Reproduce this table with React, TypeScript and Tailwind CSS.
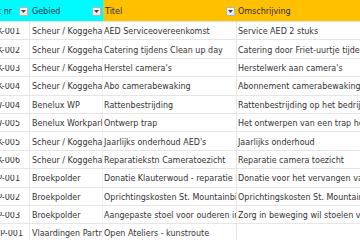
import React from 'react';

const rows = [
    { nr: 'SK-001', w: 'w-[20px]', gebied: 'Scheur / Koggehaven', titel: 'AED Serviceovereenkomst', oms: 'Service AED 2 stuks' },
    { nr: 'SK-002', w: 'w-[20px]', gebied: 'Scheur / Koggehaven', titel: 'Catering tijdens Clean up day', oms: 'Catering door Friet-uurtje tijdens Clean up day' },
    { nr: 'SK-003', w: 'w-[20px]', gebied: 'Scheur / Koggehaven', titel: "Herstel camera's", oms: "Herstelwerk aan camera's" },
    { nr: 'SK-004', w: 'w-[20px]', gebied: 'Scheur / Koggehaven', titel: 'Abo camerabewaking', oms: 'Abonnement camerabewaking' },
    { nr: 'BW-004', w: 'w-[20px]', gebied: 'Benelux WP', titel: 'Rattenbestrijding', oms: 'Rattenbestrijding op het bedrijventerrein' },
    { nr: 'BW-005', w: 'w-[20px]', gebied: 'Benelux Workpark', titel: 'Ontwerp trap', oms: 'Het ontwerpen van een trap hellingbaan' },
    { nr: 'SK-005', w: 'w-[20px]', gebied: 'Scheur / Koggehaven', titel: "Jaarlijks onderhoud AED's", oms: 'Jaarlijks onderhoud' },
    { nr: 'SK-006', w: 'w-[20px]', gebied: 'Scheur / Koggehaven', titel: 'Reparatiekstn Cameratoezicht', oms: 'Reparatie camera toezicht' },
    { nr: 'BP-001', w: 'w-[20px]', gebied: 'Broekpolder', titel: 'Donatie Klauterwoud - reparatie klimrek', oms: 'Donatie voor het vervangen van het klimrek' },
    { nr: 'BP-002', w: 'w-[20px]', gebied: 'Broekpolder', titel: 'Oprichtingskosten St. Mountainbike', oms: 'Oprichtingskosten St. Mountainbike Broekpolder' },
    { nr: 'BP-003', w: 'w-[20px]', gebied: 'Broekpolder', titel: 'Aangepaste stoel voor ouderen in beweging', oms: 'Zorg in beweging wil stoelen voor ouderen' },
    { nr: 'VP-P-001', w: 'w-[23px]', gebied: 'Vlaardingen Partners', titel: 'Open Ateliers - kunstroute', oms: '' },
];

const FilterButton = () => (
    <div className="absolute right-[2px] top-[7px] w-[9px] h-[9px] bg-gradient-to-b from-white to-[#e4e4e4] border border-[#b5b5b5] flex items-center justify-center">
        <svg width="5" height="3" viewBox="0 0 5 3">
            <path d="M0 0 L5 0 L2.5 3 Z" fill="#444" />
        </svg>
    </div>
);

export default function App() {
    return (
        <div className="w-[360px] h-[240px] overflow-hidden bg-white text-[#333] text-[8px] leading-none" style={{ fontFamily: '"DejaVu Sans", Verdana, sans-serif' }}>
            {/* header */}
            <div className="flex h-[22px] border-b border-[#e3e3e3]">
                <div className="relative w-[30px] bg-[#00fbff] flex items-end pb-[5px] overflow-hidden">
                    <div className="w-[12px] overflow-hidden flex justify-end whitespace-nowrap text-[#1f2a44]">Project nr</div>
                    <FilterButton />
                </div>
                <div className="relative w-[73px] bg-[#00fbff] flex items-end pb-[5px] pl-[2px] text-[#1f2a44]">
                    Gebied
                    <FilterButton />
                </div>
                <div className="relative w-[134px] bg-[#ffc000] flex items-end pb-[5px] pl-[2px] text-[#1f2a44]">
                    Titel
                    <FilterButton />
                </div>
                <div className="flex-1 bg-[#ffc000] flex items-end pb-[5px] pl-[1px] text-[#1f2a44]">
                    Omschrijving
                </div>
            </div>
            {/* rows */}
            {rows.map((r, i) => (
                <div key={i} className="flex h-[18.4px] border-b border-[#e6e6e6] whitespace-nowrap">
                    <div className="w-[30px] border-r border-[#e6e6e6] flex items-center pt-[3px] overflow-hidden">
                        <div className={`${r.w} overflow-hidden flex justify-end`}>{r.nr}</div>
                    </div>
                    <div className="w-[73px] border-r border-[#f0f0f0] flex items-center pt-[3px] pl-[2px] overflow-hidden">
                        {r.gebied}
                    </div>
                    <div className="w-[134px] border-r border-[#e6e6e6] flex items-center pt-[3px] pl-[1px] overflow-hidden">
                        {r.titel}
                    </div>
                    <div className="flex-1 flex items-center pt-[3px] pl-[1px] overflow-hidden">
                        {r.oms}
                    </div>
                </div>
            ))}
        </div>
    );
}
